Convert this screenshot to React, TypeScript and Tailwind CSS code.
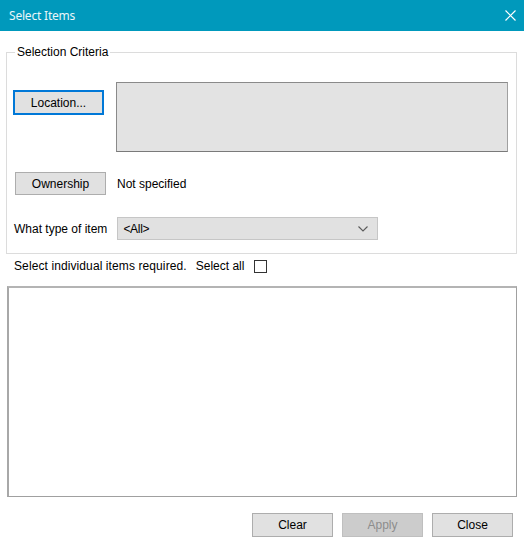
const font = "font-['Liberation_Sans',Arial,sans-serif]";

function WinButton({
  label,
  className = "",
  disabled = false,
  focused = false,
}: {
  label: string;
  className?: string;
  disabled?: boolean;
  focused?: boolean;
}) {
  return (
    <button
      disabled={disabled}
      className={`flex items-center justify-center text-[12px] leading-none ${
        focused
          ? "border-2 border-[#0078d7] bg-[#e1e1e1] text-black"
          : disabled
          ? "border border-[#bfbfbf] bg-[#cccccc] text-[#8d8d8d]"
          : "border border-[#adadad] bg-[#e1e1e1] text-black"
      } ${className}`}
    >
      {label}
    </button>
  );
}

export default function App() {
  return (
    <div className={`w-[524px] h-[548px] bg-white flex flex-col ${font}`}>
      {/* Title bar */}
      <div className="h-[31px] bg-[#0099bc] flex items-center justify-between pl-[9px] pr-[8px]">
        <span className="text-[12px] text-[#eaf6f9] font-['Noto_Sans',sans-serif] tracking-[-0.2px]">
          Select Items
        </span>
        <svg width="11" height="11" viewBox="0 0 11 11" className="mt-[-1px]">
          <path d="M0.5 0.5 L10.5 10.5 M10.5 0.5 L0.5 10.5" stroke="#ffffff" strokeWidth="1.2" />
        </svg>
      </div>

      <div className="flex flex-col px-[6px]">
        {/* Selection Criteria group */}
        <fieldset className="mt-[14px] w-[511px] h-[209px] border border-[#dcdcdc] px-0 pb-0">
          <legend className="ml-[8px] px-[2px] text-[12px] leading-[14px] text-black">
            Selection Criteria
          </legend>

          <div className="flex items-start mt-[23px]">
            <WinButton label="Location..." focused className="ml-[6px] mt-[8px] w-[91px] h-[25px]" />
            <div className="ml-[12px] w-[392px] h-[70px] bg-[#e3e3e3] border border-[#8a8a8a] border-r-[#a0a0a0] border-b-[#7a7a7a]" />
          </div>

          <div className="flex items-center mt-[20px]">
            <WinButton label="Ownership" className="ml-[8px] w-[91px] h-[23px]" />
            <span className="ml-[11px] text-[12px] text-black">Not specified</span>
          </div>

          <div className="flex items-center mt-[22px]">
            <span className="ml-[7px] text-[12px] text-black">What type of item</span>
            <div className="ml-[10px] w-[261px] h-[23px] bg-[#e1e1e1] border border-[#c6c6c6] flex items-center justify-between pl-[5px] pr-[9px]">
              <span className="text-[12px] text-black tracking-[-0.3px]">&lt;All&gt;</span>
              <svg width="10" height="6" viewBox="0 0 10 6">
                <path d="M0.5 0.5 L5 5 L9.5 0.5" fill="none" stroke="#5a5a5a" strokeWidth="1.1" />
              </svg>
            </div>
          </div>
        </fieldset>

        {/* Item selection */}
        <div className="flex items-center mt-[5px] h-[14px]">
          <span className="ml-[8px] text-[12px] text-black tracking-[0.1px]">Select individual items required.</span>
          <span className="ml-[9px] text-[12px] text-black">Select all</span>
          <span className="ml-[10px] w-[13px] h-[13px] border border-[#333333] bg-white" />
        </div>

        <div className="mt-[13px] ml-[1px] w-[510px] h-[211px] bg-white border border-[#a0a0a0] border-l-2 border-t-2 border-l-[#a8a8a8] border-t-[#b4b4b4]" />

        {/* Footer buttons */}
        <div className="flex justify-end gap-[9px] mt-[16px] pr-[5px]">
          <WinButton label="Clear" className="w-[81px] h-[24px]" />
          <WinButton label="Apply" disabled className="w-[81px] h-[24px]" />
          <WinButton label="Close" className="w-[81px] h-[24px]" />
        </div>
      </div>
    </div>
  );
}
